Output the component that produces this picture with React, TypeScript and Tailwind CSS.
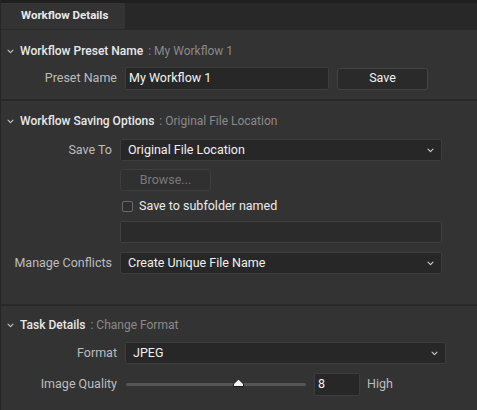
import React, { useState } from "react";

const font = { fontFamily: "Roboto, 'Noto Sans', sans-serif" };

const Chevron = ({ className = "" }: { className?: string }) => (
  <svg width="7" height="5" viewBox="0 0 7 5" className={className} fill="none">
    <path d="M1 1.2l2.5 2.5 2.5-2.5" stroke="currentColor" strokeWidth="1.1" strokeLinecap="round" strokeLinejoin="round" />
  </svg>
);

const SectionHeader = ({ title, sub }: { title: string; sub: string }) => (
  <div className="flex items-center h-[18px] pl-[6px]">
    <Chevron className="text-[#c8c8c8] mr-[6px]" />
    <span className="text-[12px] font-medium text-[#e8e8e8]">{title}</span>
    <span className="text-[12px] text-[#8a8a8a] ml-[5px]">: {sub}</span>
  </div>
);

const Select = ({ value, w }: { value: string; w: string }) => (
  <div className={`${w} h-[22px] flex items-center justify-between bg-[#272727] border border-[#3d3d3d] rounded-[2px] pl-[7px] pr-[7px]`}>
    <span className="text-[12.5px] text-[#f0f0f0]">{value}</span>
    <Chevron className="text-[#d0d0d0]" />
  </div>
);

const Label = ({ text, w }: { text: string; w: string }) => (
  <div className={`${w} shrink-0 text-right text-[12.5px] text-[#bdbdbd]`}>{text}</div>
);

export default function App() {
  const [quality] = useState(8);
  const [checked, setChecked] = useState(false);

  return (
    <div style={font} className="w-[477px] h-[410px] bg-[#333333] border-l border-[#262626] overflow-hidden">
      <div className="h-[3px] bg-[#1f1f1f]" />
      <div className="flex h-[27px] bg-[#282828] border-b border-[#2a2a2a]">
        <div className="w-[124px] bg-[#333333] flex items-center pl-[20px] text-[11.5px] font-bold text-[#e8e8e8]">
          Workflow Details
        </div>
      </div>

      {/* preset name */}
      <div className="pt-[12px] h-[71px] border-b-2 border-[#292929]">
        <SectionHeader title="Workflow Preset Name" sub="My Workflow 1" />
        <div className="flex items-center mt-[7px] h-[23px]">
          <Label text="Preset Name" w="w-[116px]" />
          <div className="ml-[8px] w-[204px] h-[23px] flex items-center bg-[#272727] border border-[#3d3d3d] rounded-[2px] pl-[3px] text-[12.5px] text-[#f2f2f2]">
            My Workflow 1
          </div>
          <button className="ml-[8px] w-[91px] h-[22px] bg-[#2a2a2a] border border-[#444444] rounded-[3px] text-[12.5px] text-[#f0f0f0]">
            Save
          </button>
        </div>
      </div>

      {/* saving options */}
      <div className="pt-[11px] h-[205px] border-b-2 border-[#292929]">
        <SectionHeader title="Workflow Saving Options" sub="Original File Location" />
        <div className="flex items-center mt-[9px]">
          <Label text="Save To" w="w-[111px]" />
          <div className="ml-[8px]">
            <Select value="Original File Location" w="w-[322px]" />
          </div>
        </div>
        <div className="ml-[119px] mt-[8px] w-[91px] h-[22px] flex items-center justify-center bg-[#303030] border border-[#3e3e3e] rounded-[3px] text-[12.5px] text-[#7a7a7a]">
          Browse...
        </div>
        <label className="ml-[121px] mt-[9px] flex items-center h-[13px]">
          <span
            onClick={() => setChecked(!checked)}
            className="w-[11px] h-[11px] border border-[#6a6a6a] rounded-[2px] bg-[#2e2e2e]"
          />
          <span className="ml-[6px] text-[12.5px] text-[#ececec]">Save to subfolder named</span>
        </label>
        <div className="ml-[119px] mt-[8px] w-[322px] h-[22px] bg-[#2b2b2b] border border-[#404040] rounded-[2px]" />
        <div className="flex items-center mt-[9px]">
          <Label text="Manage Conflicts" w="w-[111px]" />
          <div className="ml-[8px]">
            <Select value="Create Unique File Name" w="w-[322px]" />
          </div>
        </div>
      </div>

      {/* task details */}
      <div className="pt-[10px]">
        <SectionHeader title="Task Details" sub="Change Format" />
        <div className="flex items-center mt-[8px]">
          <Label text="Format" w="w-[116px]" />
          <div className="ml-[8px]">
            <Select value="JPEG" w="w-[321px]" />
          </div>
        </div>
        <div className="flex items-center mt-[8px] h-[24px]">
          <Label text="Image Quality" w="w-[116px]" />
          <div className="ml-[9px] w-[180px] relative h-[10px] flex items-center">
            <div className="w-full h-[3px] bg-[#565656] rounded-full" />
            <svg width="13" height="9" viewBox="0 0 13 9" className="absolute left-[106px] top-[-1px]">
              <path d="M1.5 8.5 L1.5 6 L6.5 1 L11.5 6 L11.5 8.5 Z" fill="#f4f4f4" stroke="#1a1a1a" strokeWidth="1" strokeLinejoin="round" />
            </svg>
          </div>
          <div className="ml-[8px] w-[46px] h-[23px] flex items-center bg-[#272727] border border-[#3d3d3d] rounded-[2px] pl-[3px] text-[12.5px] text-[#f2f2f2]">
            {quality}
          </div>
          <span className="ml-[7px] text-[12.5px] text-[#bdbdbd]">High</span>
        </div>
      </div>
    </div>
  );
}
